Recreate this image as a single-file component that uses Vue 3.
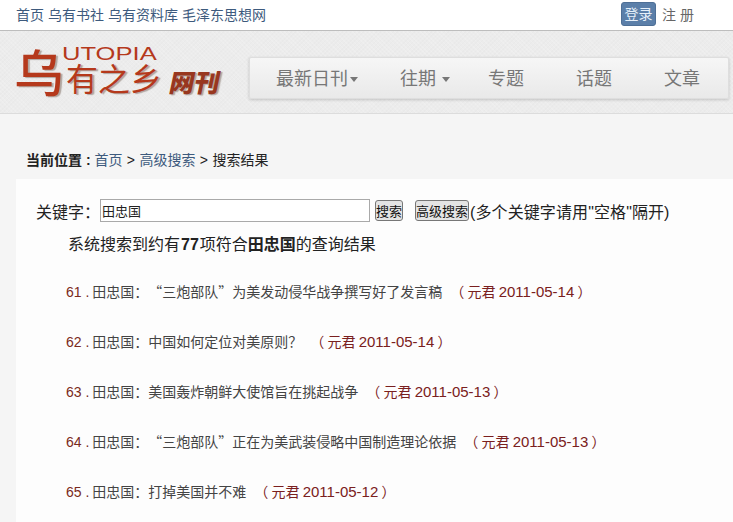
<template>
  <div class="page">
    <div class="topbar">
      <div class="toplinks">
        <a v-for="link in topLinks" :key="link">{{ link }}</a>
      </div>
      <div class="account">
        <span class="login">登录</span>
        <span class="register">注 册</span>
      </div>
    </div>

    <header class="masthead">
      <div class="logo">
        <span class="logo__big">乌</span>
        <div class="logo__stack">
          <span class="logo__latin">UTOPIA</span>
          <span class="logo__name">有之乡</span>
        </div>
        <span class="logo__sub">网刊</span>
      </div>
      <nav class="nav">
        <a v-for="item in navItems" :key="item.label" class="nav__item" :class="item.cls">
          {{ item.label }}<i v-if="item.caret" class="caret"></i>
        </a>
      </nav>
    </header>

    <div class="crumbs">
      <b>当前位置 : </b><a>首页</a><span class="sep">&gt;</span><a>高级搜索</a><span class="sep">&gt;</span><span>搜索结果</span>
    </div>

    <main class="content">
      <form class="search" @submit.prevent>
        <label>关键字：</label>
        <input class="search__input" value="田忠国" />
        <button class="btn">搜索</button>
        <button class="btn btn--adv">高级搜索</button>
        <span class="hint">(多个关键字请用"空格"隔开)</span>
      </form>
      <p class="summary">系统搜索到约有<b class="count">77</b>项符合<b>田忠国</b>的查询结果</p>
      <ul class="results">
        <li v-for="row in results" :key="row.no">
          <span class="no">{{ row.no }} .</span>
          <span class="title">田忠国：{{ row.title }}</span>
          <span class="meta">（ 元君 <span class="date">{{ row.date }}</span> ）</span>
        </li>
      </ul>
    </main>
  </div>
</template>

<script setup>
const topLinks = ['首页', '乌有书社', '乌有资料库', '毛泽东思想网'];

const navItems = [
  { label: '最新日刊', caret: true, cls: 'nav__item--first' },
  { label: '往期', caret: true, cls: 'nav__item--second' },
  { label: '专题', cls: 'nav__item--plain' },
  { label: '话题', cls: 'nav__item--plain' },
  { label: '文章' },
];

const results = [
  { no: 61, title: '“三炮部队”为美发动侵华战争撰写好了发言稿', date: '2011-05-14' },
  { no: 62, title: '中国如何定位对美原则？', date: '2011-05-14' },
  { no: 63, title: '美国轰炸朝鲜大使馆旨在挑起战争', date: '2011-05-13' },
  { no: 64, title: '“三炮部队”正在为美武装侵略中国制造理论依据', date: '2011-05-13' },
  { no: 65, title: '打掉美国并不难', date: '2011-05-12' },
];
</script>

<style>
html,
body {
  margin: 0;
  background: #f5f5f5;
}
</style>

<style scoped>
.page {
  width: 733px;
  height: 522px;
  overflow: hidden;
  font-family: "Liberation Sans", "Noto Sans CJK SC", sans-serif;
  font-size: 14px;
  color: #222;
}

.topbar {
  height: 31px;
  box-sizing: border-box;
  padding: 0 39px 2px 16px;
  display: flex;
  justify-content: space-between;
  align-items: center;
  background: #fff;
  border-bottom: 1px solid #bdbdbd;
}

.toplinks {
  display: flex;
  gap: 4px;
  color: #3d5a7d;
}

.account {
  display: flex;
  align-items: center;
  gap: 6px;
}

.login {
  width: 35px;
  height: 24px;
  line-height: 22px;
  text-align: center;
  border-radius: 3px;
  background: #5b7fa9;
  border: 1px solid #4e6f96;
  box-sizing: border-box;
  color: #e6f0fa;
}

.register {
  color: #666;
}

.masthead {
  height: 83px;
  box-sizing: border-box;
  padding: 26px 4px 0 16px;
  display: flex;
  justify-content: space-between;
  align-items: flex-start;
  background-color: #ececec;
  background-image:
    repeating-linear-gradient(45deg, rgba(255, 255, 255, 0.14) 0 1px, transparent 1px 3px),
    repeating-linear-gradient(-45deg, rgba(0, 0, 0, 0.012) 0 1px, transparent 1px 3px);
  border-bottom: 1px solid #dcdcdc;
}

.logo {
  margin-top: -10px;
  width: 208px;
  height: 51px;
  display: flex;
  align-items: flex-end;
  color: #b5391c;
  text-shadow: 2px 1px 1px #b0a6a0;
}

.logo__big {
  font-size: 50px;
  line-height: 50px;
  font-weight: 500;
  width: 50px;
  flex: none;
  margin: 0 2px -2px -2px;
}

.logo__stack {
  display: flex;
  flex-direction: column;
  width: 104px;
  flex: none;
}

.logo__latin {
  font-size: 18px;
  line-height: 15px;
  height: 15px;
  margin-left: -4px;
  transform: scaleX(1.42);
  transform-origin: left;
  text-shadow: none;
}

.logo__name {
  font-size: 32px;
  line-height: 36px;
  font-weight: 400;
  white-space: nowrap;
}

.logo__sub {
  font-size: 25px;
  line-height: 30px;
  font-weight: 900;
  transform: skewX(-12deg);
  white-space: nowrap;
  color: #98371f;
}

.nav {
  width: 480px;
  height: 42px;
  box-sizing: border-box;
  display: flex;
  align-items: center;
  background: linear-gradient(#f6f6f6, #e9e9e9);
  border: 1px solid #dedede;
  border-radius: 2px;
  box-shadow: 0 1px 3px rgba(0, 0, 0, 0.18);
  color: #777;
  font-size: 18px;
  line-height: 36px;
  padding-top: 1px;
}

.nav__item {
  display: flex;
  align-items: center;
  flex: none;
}

.nav__item--first { width: 150px; padding-left: 26px; box-sizing: border-box; }
.nav__item--second { width: 88px; }
.nav__item--plain { width: 88px; }

.caret {
  width: 0;
  height: 0;
  margin-left: 2px;
  margin-top: 2px;
  border-left: 4.5px solid transparent;
  border-right: 4.5px solid transparent;
  border-top: 5px solid #777;
}

.nav__item--second .caret {
  margin-left: 6px;
}

.crumbs {
  height: 65px;
  box-sizing: border-box;
  padding: 37px 0 0 26px;
  background: #f5f5f5;
  line-height: 18px;
  white-space: pre-wrap;
}

.crumbs a {
  color: #3d5a7d;
}

.sep {
  margin: 0 4.4px;
}

.content {
  margin-left: 16px;
  height: 343px;
  background: #fdfdfd;
  color: #222;
}

.search {
  display: flex;
  align-items: center;
  height: 23px;
  padding: 20px 0 0 20px;
  font-size: 16px;
}

.search label {
  width: 64px;
  flex: none;
}

.search__input {
  width: 270px;
  height: 23px;
  box-sizing: border-box;
  border: 1px solid #a9a9a9;
  padding: 0 1px;
  font: 13px "Liberation Sans", "Noto Sans CJK SC", sans-serif;
  color: #222;
  background: #fff;
}

.btn {
  height: 21px;
  padding: 0;
  margin-left: 5px;
  border: 1px solid #777;
  border-radius: 3px;
  background: #e4e4e4;
  font: 13px "Liberation Sans", "Noto Sans CJK SC", sans-serif;
  color: #111;
}

.btn--adv {
  margin-left: 12px;
}

.hint {
  white-space: nowrap;
  margin-left: 1px;
  letter-spacing: 0.1px;
}

.summary {
  margin: 12px 0 0 52px;
  font-size: 16px;
  line-height: 22px;
}

.count {
  margin: 0 1px;
}

.results {
  list-style: none;
  margin: 25px 0 0 50px;
  padding: 0;
}

.results li {
  height: 50px;
  line-height: 20px;
  white-space: nowrap;
}

.no {
  color: #7a2a20;
  font-size: 14px;
}

.title {
  font-family: "Noto Sans CJK SC", sans-serif;
  color: #444;
  margin-left: 3px;
  text-spacing-trim: space-all;
}

.meta {
  font-family: "Noto Sans CJK SC", sans-serif;
  color: #7a2020;
  margin-left: 8px;
}

.date {
  font-family: "Liberation Sans", sans-serif;
  font-size: 15px;
}
</style>
